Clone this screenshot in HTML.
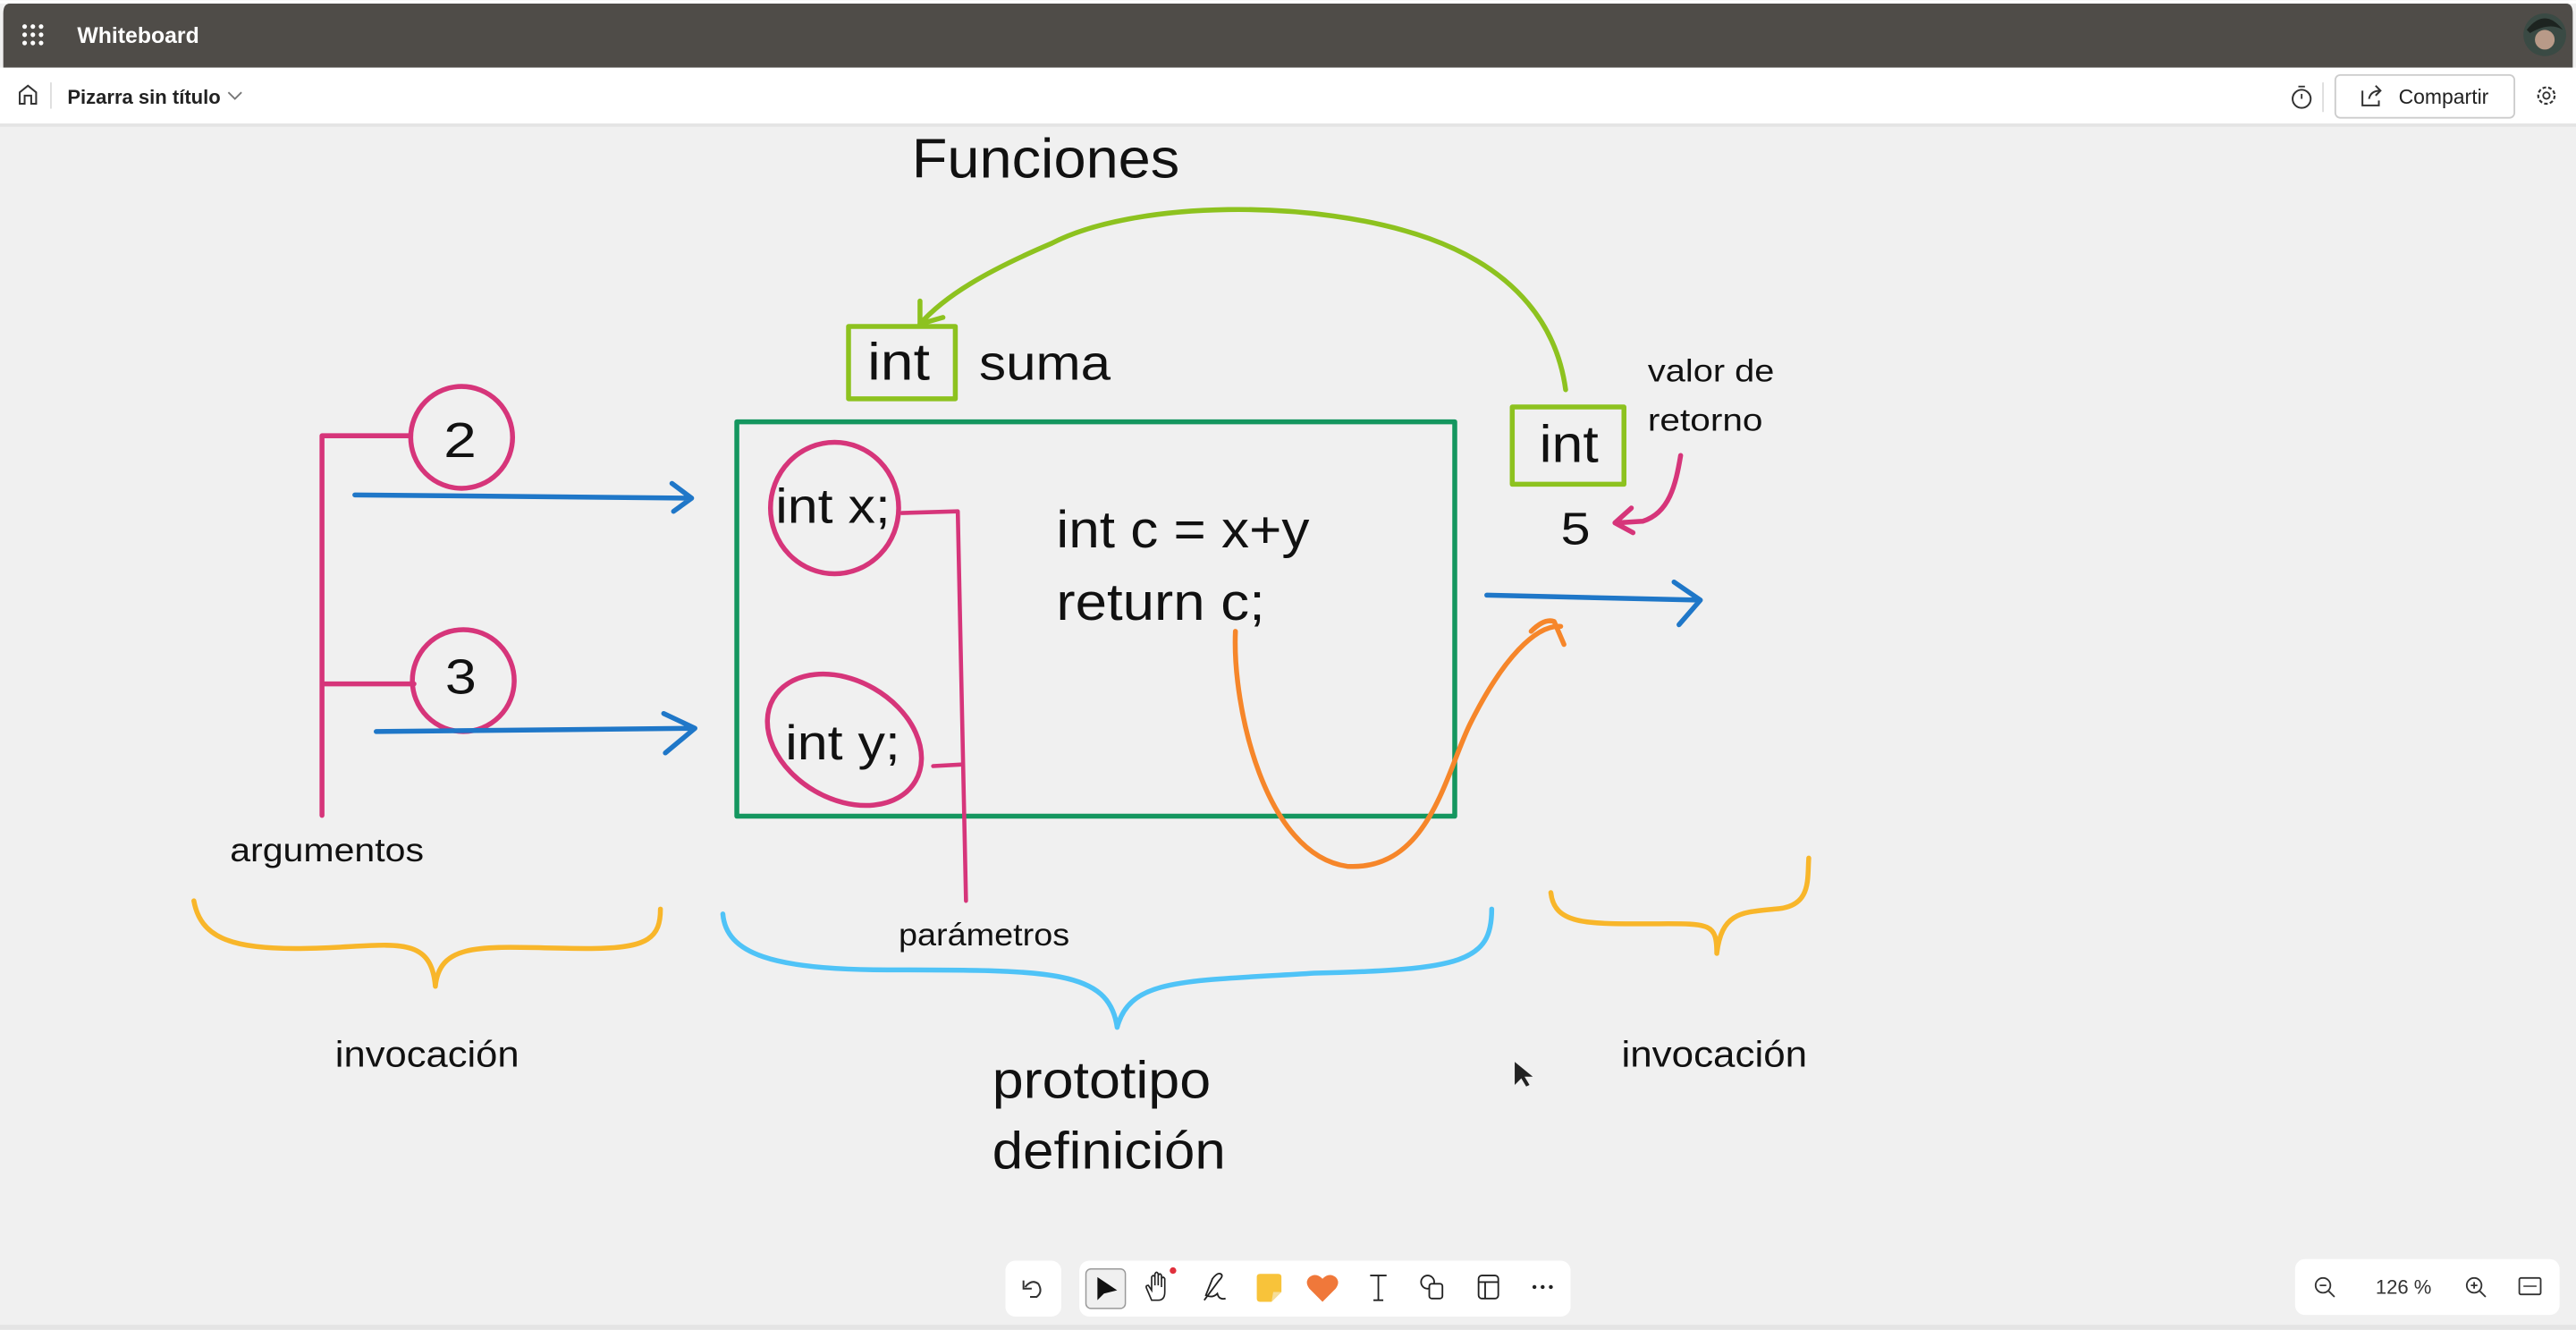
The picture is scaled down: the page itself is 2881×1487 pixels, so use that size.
<!DOCTYPE html>
<html><head><meta charset="utf-8"><style>
html,body{margin:0;padding:0;background:#f0f0f0;overflow:hidden}
svg{display:block}
text{font-family:"Liberation Sans",sans-serif}
</style></head><body>
<svg width="2881" height="1487" viewBox="0 0 1568 809" xmlns="http://www.w3.org/2000/svg">
<rect width="1568" height="809" fill="#f0f0f0"/>
<!-- top bar -->
<rect x="0" y="0" width="1568" height="2" fill="#fff"/>
<path d="M6,2 H1562 Q1566,2 1566,8 V41 H2 V8 Q2,2 6,2Z" fill="#4f4c48"/>
<g fill="#fff">
<circle cx="15" cy="16" r="1.4"/><circle cx="20" cy="16" r="1.4"/><circle cx="25" cy="16" r="1.4"/>
<circle cx="15" cy="21" r="1.4"/><circle cx="20" cy="21" r="1.4"/><circle cx="25" cy="21" r="1.4"/>
<circle cx="15" cy="26" r="1.4"/><circle cx="20" cy="26" r="1.4"/><circle cx="25" cy="26" r="1.4"/>
</g>
<text x="47" y="26" font-size="13.5" font-weight="bold" fill="#fff">Whiteboard</text>
<circle cx="1549" cy="21" r="13" fill="#3a4a44"/><circle cx="1549" cy="24" r="6" fill="#b89a88"/><path d="M1538,18 Q1549,4 1560,18 Q1552,13 1540,20Z" fill="#1d2420"/>
<rect x="0" y="41" width="1568" height="34" fill="#fff"/>
<rect x="0" y="75" width="1568" height="2" fill="#e4e4e4"/>
<path d="M12,63 V56 L17,52 L22,56 V63 H19 V58 H15 V63Z" fill="none" stroke="#333" stroke-width="1.1"/>
<line x1="31" y1="50" x2="31" y2="66" stroke="#ddd"/>
<text x="41" y="63" font-size="12" font-weight="bold" fill="#222">Pizarra sin título</text>
<path d="M139,56 L143,60 L147,56" fill="none" stroke="#777" stroke-width="1"/>
<circle cx="1401" cy="60" r="5.5" fill="none" stroke="#333" stroke-width="1.1"/><line x1="1401" y1="57" x2="1401" y2="60" stroke="#333"/><line x1="1399" y1="52.5" x2="1403" y2="52.5" stroke="#333"/>
<line x1="1414" y1="50" x2="1414" y2="68" stroke="#ddd"/>
<rect x="1421.5" y="45.5" width="109" height="26" rx="3" fill="#fff" stroke="#ccc"/>
<path d="M1438,55 V64 H1448 V61 M1442,60 Q1443,55 1449,55 M1446,52 L1449,55 L1446,58" fill="none" stroke="#333" stroke-width="1.1"/>
<text x="1460" y="63" font-size="12.5" fill="#222">Compartir</text>
<circle cx="1550" cy="58" r="5" fill="none" stroke="#333" stroke-width="1.2" stroke-dasharray="2.2 1.3"/><circle cx="1550" cy="58" r="2" fill="none" stroke="#333"/>

<!-- drawing -->
<g fill="none" stroke-linecap="round" stroke-linejoin="round">
<path d="M953,237 C948,200 925,165 870,145 C800,120 690,122 640,148 C600,165 575,180 560,197" stroke="#8dc21f" stroke-width="3"/>
<path d="M560,197 L560,183 M560,197 L574,193" stroke="#8dc21f" stroke-width="3"/>
<rect x="516.5" y="198.5" width="65" height="44" stroke="#8dc21f" stroke-width="3"/>
<rect x="920.5" y="247.5" width="68" height="47" stroke="#8dc21f" stroke-width="3"/>
<rect x="448.5" y="256.5" width="437" height="240" stroke="#14965f" stroke-width="3"/>
<circle cx="281" cy="266" r="31" stroke="#d6357a" stroke-width="3"/>
<circle cx="282" cy="414" r="31" stroke="#d6357a" stroke-width="3"/>
<path d="M196,496 V265 H250 M196,416 H252" stroke="#d6357a" stroke-width="3"/>
<path d="M216,301 L421,303 M409,294 L421,303 L410,311" stroke="#1f77c8" stroke-width="3"/>
<path d="M229,445 L423,443 M404,434 L423,443 L405,458" stroke="#1f77c8" stroke-width="3"/>
<ellipse cx="508" cy="309" rx="39" ry="40" stroke="#d6357a" stroke-width="3"/>
<ellipse cx="514" cy="450" rx="50" ry="36" transform="rotate(30 514 450)" stroke="#d6357a" stroke-width="3"/>
<path d="M549,312 L583,311 L588,548 M568,466 L586,465" stroke="#d6357a" stroke-width="2.5"/>
<path d="M752,384 C750,430 770,520 820,527 C870,530 880,470 895,440 C915,400 935,380 950,381" stroke="#f6862a" stroke-width="3"/>
<path d="M932,384 Q940,376 946,378 L952,392" stroke="#f6862a" stroke-width="3"/>
<path d="M905,362 L1033,365 M1019,354 L1035,365 L1022,380" stroke="#1f77c8" stroke-width="3"/>
<path d="M1023,277 C1020,295 1016,312 1000,317 L984,318 M993,309 L983,318 L994,324" stroke="#d6357a" stroke-width="3"/>
<path d="M118,548 C122,570 140,577 180,577 C235,577 262,565 265,600 C268,570 300,577 360,577 C395,577 402,570 402,553" stroke="#f8b62a" stroke-width="3"/>
<path d="M440,556 C442,580 470,590 540,590 C640,590 675,590 680,625 C688,595 720,597 800,592 C890,590 908,585 908,553" stroke="#4fc3f7" stroke-width="3"/>
<path d="M944,543 C946,562 965,562 1000,562 C1040,562 1045,560 1045,580 C1048,555 1060,555 1080,553 C1103,552 1100,535 1101,522" stroke="#f8b62a" stroke-width="3"/>
</g>
<g fill="#111">
<text x="555" y="108" font-size="34" textLength="163" lengthAdjust="spacingAndGlyphs">Funciones</text>
<text x="528" y="231" font-size="32" textLength="38" lengthAdjust="spacingAndGlyphs">int</text>
<text x="596" y="231" font-size="30" textLength="80" lengthAdjust="spacingAndGlyphs">suma</text>
<text x="937" y="281" font-size="32" textLength="36" lengthAdjust="spacingAndGlyphs">int</text>
<text x="270" y="278" font-size="30" textLength="20" lengthAdjust="spacingAndGlyphs">2</text>
<text x="271" y="422" font-size="30" textLength="19" lengthAdjust="spacingAndGlyphs">3</text>
<text x="472" y="318" font-size="30" textLength="70" lengthAdjust="spacingAndGlyphs">int x;</text>
<text x="478" y="462" font-size="30" textLength="70" lengthAdjust="spacingAndGlyphs">int y;</text>
<text x="643" y="333" font-size="32" textLength="154" lengthAdjust="spacingAndGlyphs">int c = x+y</text>
<text x="643" y="377" font-size="32" textLength="127" lengthAdjust="spacingAndGlyphs">return c;</text>
<text x="950" y="331" font-size="28" textLength="18" lengthAdjust="spacingAndGlyphs">5</text>
<text x="1003" y="232" font-size="19" textLength="77" lengthAdjust="spacingAndGlyphs">valor de</text>
<text x="1003" y="262" font-size="19" textLength="70" lengthAdjust="spacingAndGlyphs">retorno</text>
<text x="140" y="524" font-size="20" textLength="118" lengthAdjust="spacingAndGlyphs">argumentos</text>
<text x="547" y="575" font-size="19" textLength="104" lengthAdjust="spacingAndGlyphs">parámetros</text>
<text x="204" y="649" font-size="22" textLength="112" lengthAdjust="spacingAndGlyphs">invocación</text>
<text x="987" y="649" font-size="22" textLength="113" lengthAdjust="spacingAndGlyphs">invocación</text>
<text x="604" y="668" font-size="32" textLength="133" lengthAdjust="spacingAndGlyphs">prototipo</text>
<text x="604" y="711" font-size="32" textLength="142" lengthAdjust="spacingAndGlyphs">definición</text>
</g>
<path d="M922,646 V660 L926,656 L929,661 L931,660 L928,655 L933,655Z" fill="#222"/>

<!-- bottom toolbar -->
<rect x="0" y="806" width="1568" height="3" fill="#e4e4e4"/>
<rect x="612" y="767" width="34" height="34" rx="6" fill="#fff"/>
<path d="M623,779 V784 H628 M624,783 Q628,778 632,781 Q635,786 631,789 H627" fill="none" stroke="#333" stroke-width="1.1"/>
<rect x="657" y="767" width="299" height="34" rx="6" fill="#fff"/>
<rect x="661" y="772" width="24" height="24" rx="3" fill="#f0f0f0" stroke="#999" stroke-width="0.8"/>
<path d="M668,777 V791 L672,787 L680,785Z" fill="#111"/>
<path d="M701,791 L698,784 Q697,782 699,782 L701,785 V777 Q702,775 703,777 V782 V775 Q704,773 705,775 V782 V776 Q706,774 707,776 V783 V778 Q708,776 709,778 V786 Q709,791 705,791Z" fill="none" stroke="#222" stroke-width="0.9"/>
<circle cx="714" cy="773" r="2" fill="#e0303c"/>
<path d="M733,791 L742,779 Q745,776 743,775 Q741,774 738,778 L734,788 Q738,790 741,787 Q742,791 746,790" fill="none" stroke="#222" stroke-width="1"/>
<path d="M765,777 Q765,775 767,775 H778 Q780,775 780,777 V786 L774,792 H767 Q765,792 765,790Z" fill="#f8c33a"/>
<path d="M774,792 L775,786 L780,786" fill="#f5dd9a"/>
<path d="M805,792 L797,784 Q794,780 797,777 Q801,774 805,778 Q809,774 813,777 Q816,780 813,784Z" fill="#f0783a"/>
<path d="M834,776 H844 M839,776 V791 M836,791 H842" fill="none" stroke="#222" stroke-width="1"/>
<circle cx="869" cy="780" r="4" fill="none" stroke="#222" stroke-width="1"/><rect x="870" y="781" width="8" height="9" rx="1.5" fill="#fff" stroke="#222" stroke-width="1"/>
<rect x="900" y="776" width="12" height="14" rx="2" fill="none" stroke="#222" stroke-width="1"/><path d="M900,780 H912 M904,780 V790" stroke="#222" stroke-width="1"/>
<g fill="#222"><circle cx="934" cy="783" r="1.2"/><circle cx="939" cy="783" r="1.2"/><circle cx="944" cy="783" r="1.2"/></g>
<rect x="1397" y="766" width="161" height="34" rx="6" fill="#fff"/>
<circle cx="1414" cy="782" r="4.5" fill="none" stroke="#333" stroke-width="1"/><path d="M1412,782 H1416 M1417.5,785.5 L1421,789" stroke="#333" stroke-width="1"/>
<text x="1446" y="787" font-size="12" fill="#333">126 %</text>
<circle cx="1506" cy="782" r="4.5" fill="none" stroke="#333" stroke-width="1"/><path d="M1504,782 H1508 M1506,780 V784 M1509.5,785.5 L1513,789" stroke="#333" stroke-width="1"/>
<rect x="1533.5" y="777.5" width="13" height="10" rx="1" fill="none" stroke="#333" stroke-width="1"/><path d="M1536,782.5 H1544" stroke="#333" stroke-width="0.8"/>
</svg>
</body></html>
